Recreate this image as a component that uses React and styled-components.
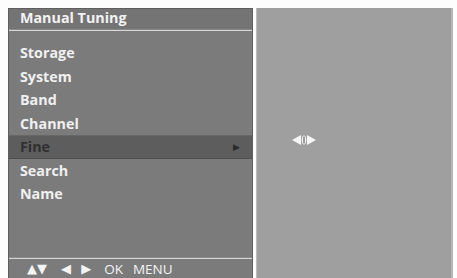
import styled, { createGlobalStyle } from "styled-components";

const GlobalStyle = createGlobalStyle`
  html, body {
    margin: 0;
    padding: 0;
    background: #fdfdfd;
  }
  body {
    font-family: "Open Sans", "DejaVu Sans", sans-serif;
  }
`;

const Screen = styled.div`
  width: 457px;
  height: 278px;
  overflow: hidden;
  display: flex;
  gap: 3px;
  padding: 8px 4px 0 8px;
  box-sizing: border-box;
`;

const MenuPanel = styled.div`
  width: 245px;
  height: 270px;
  flex: none;
  box-sizing: border-box;
  background: #7b7b7b;
  border: 1px solid #5e5e5e;
  border-bottom: 0;
  display: flex;
  flex-direction: column;
`;

const Header = styled.div`
  height: 20px;
  flex: none;
  background: #747474;
  color: #f2f2f2;
  font-weight: 700;
  font-size: 14.3px;
  line-height: 17px;
  padding-left: 11px;
`;

const Divider = styled.div`
  height: 2px;
  flex: none;
  background: #d6d6d6;
  border-top: 1px solid #8a8a8a;
  box-sizing: border-box;
`;

const List = styled.div`
  flex: 1;
  padding-top: 10px;
  display: flex;
  flex-direction: column;
`;

const Row = styled.div`
  height: 23.5px;
  flex: none;
  display: flex;
  align-items: center;
  justify-content: space-between;
  padding: 0 12px 0 11px;
  font-weight: 700;
  font-size: 14.3px;
  color: ${(p) => (p.$active ? "#303030" : "#f0f0f0")};
  background: ${(p) => (p.$active ? "#5d5d5d" : "transparent")};
  box-shadow: ${(p) => (p.$active ? "inset 0 1px 0 #676767, inset 0 -1px 0 #4f4f4f" : "none")};
`;

const Pointer = styled.span`
  font-family: "DejaVu Sans", sans-serif;
  font-size: 9px;
  color: #2a2a2a;
`;

const Footer = styled.div`
  height: 19px;
  flex: none;
  display: flex;
  align-items: center;
  gap: 10px;
  padding-left: 18px;
  color: #f4f4f4;
  font-size: 13.5px;
`;

const Keys = styled.span`
  font-family: "DejaVu Sans", sans-serif;
  font-size: 13px;
  letter-spacing: ${(p) => p.$spread || "0"};
  margin-right: ${(p) => p.$after || "0"};
`;

const PreviewPanel = styled.div`
  flex: 1;
  height: 280px;
  box-sizing: border-box;
  background: #9f9f9f;
  border-left: 1px solid #bdbdbd;
  border-right: 2px solid #b5b5b5;
  padding: 122px 0 0 34px;
`;

const items = ["Storage", "System", "Band", "Channel", "Fine", "Search", "Name"];

const TuneMarker = () => (
  <svg width="26" height="14" viewBox="0 0 26 14">
    <polygon points="1,7 10,2 10,12" fill="#f6f6f6" />
    <polygon points="25,7 16,2 16,12" fill="#f6f6f6" />
    <ellipse cx="13" cy="7" rx="2.2" ry="4.5" fill="#f6f6f6" />
    <rect x="12.4" y="3.5" width="1.2" height="7" fill="#5a5a5a" />
  </svg>
);

export default function App() {
  return (
    <>
      <GlobalStyle />
      <Screen>
        <MenuPanel>
          <Header>Manual Tuning</Header>
          <Divider />
          <List>
            {items.map((item) => (
              <Row key={item} $active={item === "Fine"}>
                {item}
                {item === "Fine" && <Pointer>▶</Pointer>}
              </Row>
            ))}
          </List>
          <Divider />
          <Footer>
            <Keys $after="4px">▲▼</Keys>
            <Keys $spread="3px">◀ ▶</Keys>
            <span>OK</span>
            <span>MENU</span>
          </Footer>
        </MenuPanel>
        <PreviewPanel>
          <TuneMarker />
        </PreviewPanel>
      </Screen>
    </>
  );
}
